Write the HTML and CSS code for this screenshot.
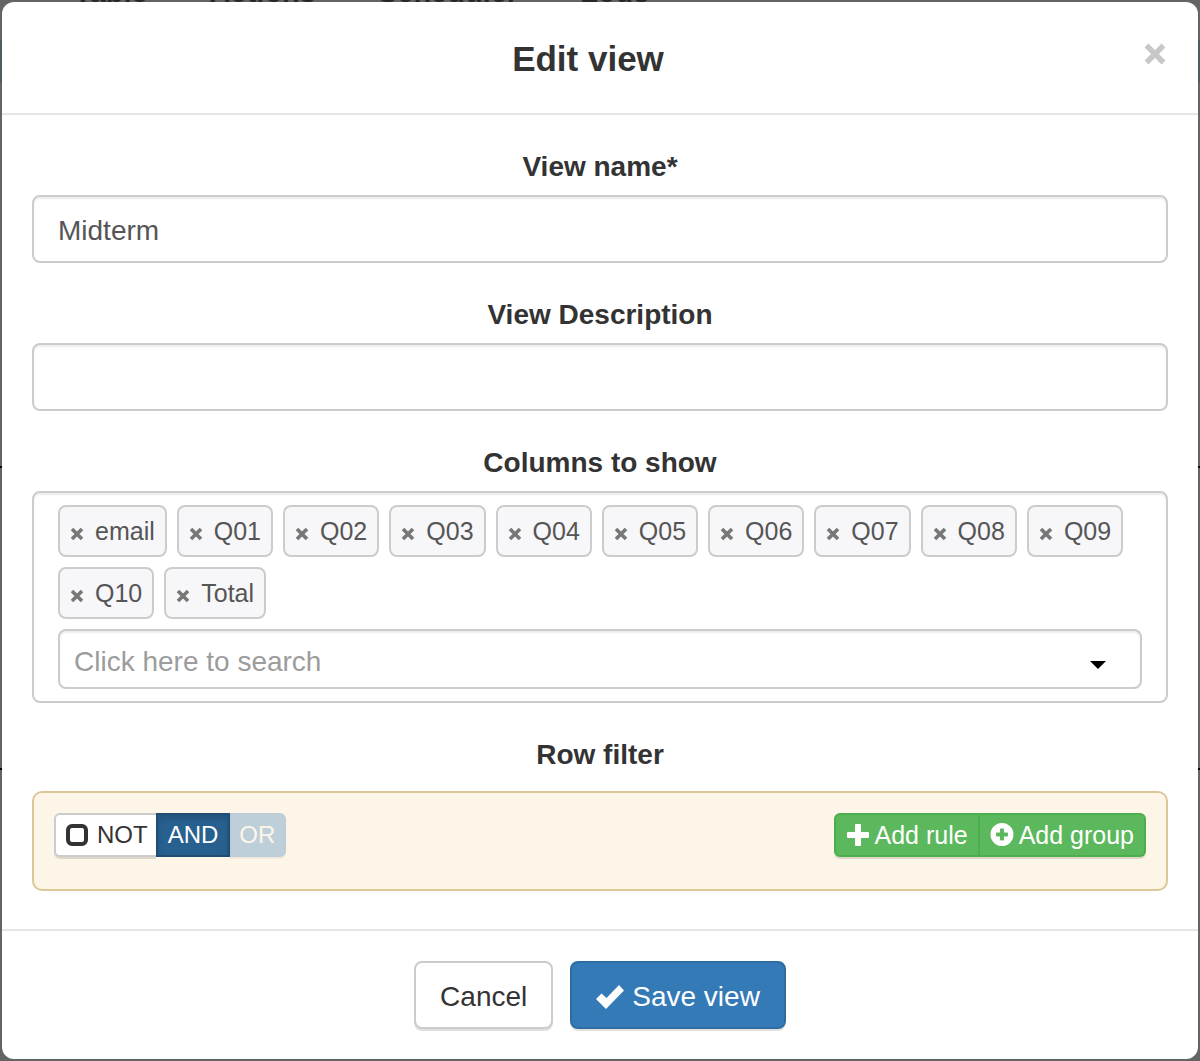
FILE: index.html
```
<!DOCTYPE html>
<html lang="en">
<head>
<meta charset="utf-8">
<title>Edit view</title>
<meta name="viewport" content="width=device-width, initial-scale=1">
<link rel="stylesheet" href="styles.css">
</head>
<body>
<div class="page" aria-hidden="true">
  <div class="page-nav"><span>Table</span><span>Actions</span><span>Scheduler</span><span>Logs</span></div>
  <div class="page-banner"></div>
  <div class="page-toolbar"></div>
  <div class="page-table"></div>
</div>

<form class="dialog" role="dialog" aria-labelledby="title">
  <header class="dialog-header">
    <h1 class="title" id="title">Edit view</h1>
    <button class="close" type="button" aria-label="Close">
      <svg width="22" height="22" viewBox="0 0 22 22"><path d="M2.500 2.500L19.500 19.500M19.500 2.500L2.500 19.500" stroke="currentColor" stroke-width="5.400"/></svg>
    </button>
  </header>

  <div class="dialog-body">
    <div class="field">
      <label class="label" for="name">View name*</label>
      <input class="text-input" id="name" type="text" value="Midterm">
    </div>
    <div class="field">
      <label class="label" for="description">View Description</label>
      <input class="text-input" id="description" type="text">
    </div>
    <div class="field">
      <label class="label" for="search">Columns to show</label>
      <div class="picker">
        <svg class="sprite"><symbol id="x" viewBox="0 0 14 14"><path d="M2 2L12 12M12 2L2 12" stroke="currentColor" stroke-width="3.6"/></symbol></svg>
        <div class="chips">
          <button class="chip" type="button"><svg class="chip-x"><use href="#x"/></svg>email</button>
          <button class="chip" type="button"><svg class="chip-x"><use href="#x"/></svg>Q01</button>
          <button class="chip" type="button"><svg class="chip-x"><use href="#x"/></svg>Q02</button>
          <button class="chip" type="button"><svg class="chip-x"><use href="#x"/></svg>Q03</button>
          <button class="chip" type="button"><svg class="chip-x"><use href="#x"/></svg>Q04</button>
          <button class="chip" type="button"><svg class="chip-x"><use href="#x"/></svg>Q05</button>
          <button class="chip" type="button"><svg class="chip-x"><use href="#x"/></svg>Q06</button>
          <button class="chip" type="button"><svg class="chip-x"><use href="#x"/></svg>Q07</button>
          <button class="chip" type="button"><svg class="chip-x"><use href="#x"/></svg>Q08</button>
          <button class="chip" type="button"><svg class="chip-x"><use href="#x"/></svg>Q09</button>
          <button class="chip" type="button"><svg class="chip-x"><use href="#x"/></svg>Q10</button>
          <button class="chip" type="button"><svg class="chip-x"><use href="#x"/></svg>Total</button>
        </div>
        <div class="search">
          <input class="search-input" id="search" type="text" placeholder="Click here to search">
          <svg class="caret" width="16" height="8" viewBox="0 0 16 8"><path d="M0 0H16L8 8Z"/></svg>
        </div>
      </div>
    </div>
    <div class="field">
      <div class="label">Row filter</div>
      <div class="filter">
        <div class="group">
          <label class="small-btn not"><input class="tick" type="checkbox">NOT</label>
          <label class="small-btn and"><input class="radio" type="radio" name="condition" checked>AND</label>
          <label class="small-btn or"><input class="radio" type="radio" name="condition" disabled>OR</label>
        </div>
        <div class="group">
          <button class="small-btn add" type="button"><svg width="24" height="24" viewBox="0 0 24 24"><path d="M9 2q0-1 1-1h4q1 0 1 1v7h7q1 0 1 1v4q0 1-1 1h-7v7q0 1-1 1h-4q-1 0-1-1v-7H2q-1 0-1-1v-4q0-1 1-1h7z" fill="currentColor"/></svg>Add rule</button>
          <button class="small-btn add" type="button"><svg width="24" height="24" viewBox="0 0 24 24"><path fill-rule="evenodd" d="M12 0a11.500 11.500 0 1 0 0 23a11.500 11.500 0 1 0 0-23zM10 6.500q0-1 1-1h2q1 0 1 1v3h3q1 0 1 1v2q0 1-1 1h-3v3q0 1-1 1h-2q-1 0-1-1v-3H7q-1 0-1-1v-2q0-1 1-1h3z" fill="currentColor"/></svg>Add group</button>
        </div>
      </div>
    </div>
  </div>

  <footer class="dialog-footer">
    <button class="btn" type="button">Cancel</button>
    <button class="btn primary" type="submit"><svg width="28" height="24" viewBox="0 0 28 24"><path d="M0 14L5.500 8.500L10.500 13L23 0L28 5.500L10 24Z" fill="currentColor"/></svg>Save view</button>
  </footer>
</form>
</body>
</html>
```
FILE: styles.css
```
* { box-sizing: border-box; }
body {
  margin: 0;
  padding: 2px;
  background: #646464;
  color: #333;
  font: 28px/40px "Liberation Sans", Arial, sans-serif;
}
button, input { font: inherit; color: inherit; margin: 0; }

/* dimmed page behind the dialog */
.page { position: absolute; inset: 0; overflow: hidden; }
.page-nav {
  display: flex;
  gap: 62px;
  height: 40px;
  margin-top: -26px;
  padding-left: 74px;
  color: #2a2626;
  font-size: 29px;
  font-weight: bold;
  line-height: 36px;
}
.page-banner { height: 43px; margin-top: 26px; background: #4d5c60; }
.page-toolbar { height: 383px; }
.page-table { height: 304px; border: solid #000; border-width: 2px 0; }

.dialog {
  position: relative;
  background: #fff;
  border-radius: 12px;
}
.dialog-header {
  position: relative;
  padding: 30px;
  border-bottom: 2px solid #e5e5e5;
}
.title {
  margin: 0;
  padding: 2px 24px 0 0;
  font-size: 35px;
  line-height: 49px;
  text-align: center;
}
.close {
  position: absolute;
  top: 41px;
  right: 32px;
  display: flex;
  padding: 0;
  border: 0;
  background: none;
  color: #c8c8c8;
}

.dialog-body {
  display: flex;
  flex-direction: column;
  gap: 30px;
  padding: 30px;
}
.field { display: flex; flex-direction: column; gap: 10px; }
.label { font-weight: bold; text-align: center; padding-top: 4px; line-height: 36px; }
.text-input, .picker, .search-input {
  width: 100%;
  border: 2px solid #ccc;
  border-radius: 8px;
  background: #fff;
  box-shadow: inset 0 2px 2px rgba(0, 0, 0, .075);
}
.text-input { height: 68px; padding: 4px 24px 0; color: #555; }
.picker { display: flex; flex-direction: column; gap: 10px; padding: 12px 24px; }
.sprite { position: absolute; width: 0; height: 0; }
.chips { display: flex; flex-wrap: wrap; gap: 10px; }
.chip {
  display: flex;
  align-items: center;
  gap: 11px;
  height: 52px;
  padding: 0 10px;
  border: 2px solid #ccc;
  border-radius: 8px;
  background: #f7f7f9;
  color: #555;
  font-size: 25px;
}
.chip-x { width: 14px; height: 14px; margin-top: 6px; color: #777; }
.search { position: relative; }
.search-input { display: block; height: 60px; padding: 6px 14px 0; }
.search-input::placeholder { color: #9c9c9c; opacity: 1; }
.caret { position: absolute; right: 36px; top: 32px; }

.filter {
  display: flex;
  justify-content: space-between;
  margin: 8px 0;
  padding: 20px 20px 32px;
  border: 2px solid #dcc896;
  border-radius: 10px;
  background: #fdf6e8;
}
.group { display: flex; }
.small-btn {
  display: flex;
  align-items: center;
  height: 44px;
  padding: 0 10px;
  border: 2px solid;
  font-size: 24px;
  line-height: 36px;
  box-shadow: 0 2px 0 rgba(0, 0, 0, .12);
}
.small-btn:first-child { border-radius: 6px 0 0 6px; }
.small-btn:last-child { border-radius: 0 6px 6px 0; }
.not { gap: 9px; padding-right: 8px; background: #fff; border-color: #ccc; border-right: 0; }
.tick {
  appearance: none;
  width: 22px;
  height: 22px;
  border: 4px solid #333;
  border-radius: 6px;
}
.radio { position: absolute; opacity: 0; }
.and { background: #286090; border-color: #204d74; color: #fff; box-shadow: inset 0 4px 6px rgba(0, 0, 0, .125); }
.or { background: #becfd9; border-color: #bccdd7; color: #fdf6e8; padding: 0 9px 0 7px; box-shadow: 0 2px 0 rgba(0, 0, 0, .05); }
.add { gap: 5px; background: #5cb85c; border-color: #4cae4c; color: #fff; font-size: 25px; }
.add + .add { border-left: 0; }

.dialog-footer {
  display: flex;
  justify-content: center;
  gap: 17px;
  padding: 30px;
  border-top: 2px solid #e5e5e5;
}
.btn {
  display: flex;
  align-items: center;
  gap: 8px;
  height: 68px;
  padding: 3px 24px 0;
  border: 2px solid #ccc;
  border-radius: 8px;
  background: #fff;
  box-shadow: 0 2px 0 rgba(0, 0, 0, .12);
}
.primary { background: #337ab7; border-color: #2e6da4; color: #fff; }
```
